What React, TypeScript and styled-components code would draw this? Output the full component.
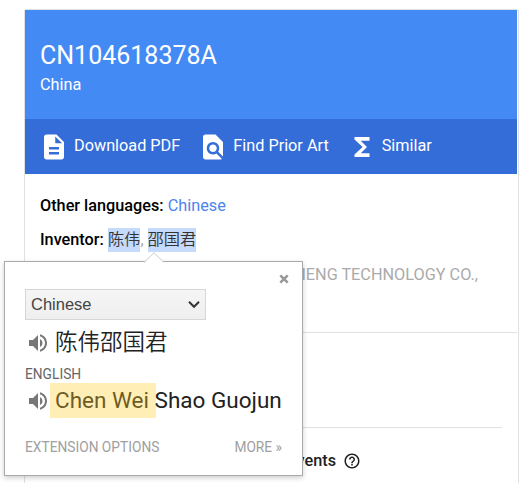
import React from 'react';
import styled, { createGlobalStyle } from 'styled-components';
import {
  MdDescription,
  MdFindInPage,
  MdFunctions,
  MdHelpOutline,
  MdVolumeUp,
} from 'react-icons/md';

const GlobalStyle = createGlobalStyle`
  * {
    box-sizing: border-box;
  }

  body {
    margin: 0;
    overflow: hidden;
    background: #fff;
    font-family: Roboto, 'Noto Sans CJK SC', sans-serif;
  }
`;

const Page = styled.main`
  position: relative;
  height: 483px;
  padding: 9px 9px 0 24px;
  overflow: hidden;
`;

const Card = styled.section`
  height: 490px;
  padding-right: 1px;
  border: 1px solid #e0e0e0;
  border-radius: 2px;
`;

const Header = styled.header`
  height: 109px;
  padding: 30px 15px 0;
  color: #fff;
  background: #448af5;
`;

const Title = styled.h1`
  margin: 0;
  font-size: 25px;
  font-weight: 400;
  line-height: 32px;
`;

const Country = styled.div`
  font-size: 16.25px;
  line-height: 26px;
`;

const Toolbar = styled.nav`
  display: flex;
  gap: 19px;
  height: 55px;
  padding: 13px 14px 0;
  background: #346cd8;
`;

const ToolbarLink = styled.a`
  display: flex;
  gap: 5px;
  height: 30px;
  margin-right: -1px;
  color: #fff;
  font-size: 16.25px;
  line-height: 28px;
`;

const Details = styled.div`
  height: 159px;
  padding: 15px 15px 0;
  border-bottom: 1px solid #e0e0e0;
  font-size: 16.25px;
`;

const Row = styled.div`
  height: 34.5px;
  line-height: 34px;
  color: #aaa;
  white-space: nowrap;
`;

const Label = styled.span`
  color: #000;
  font-weight: 500;
`;

const LanguageLink = styled.a`
  color: #4d83ee;
`;

const Marked = styled.span`
  display: inline-block;
  height: 24px;
  line-height: 24px;
  vertical-align: middle;
  color: #333;
  background: #c6dafc;
  font-weight: 350;
`;

const Inventors = styled(Row)`
  margin-top: -1px;
  height: 35.5px;
`;

const Assignee = styled(Row)`
  padding-right: 24px;
  text-align: right;
`;

const Status = styled.div`
  height: 95px;
  margin: 0 15px;
  border-bottom: 1px solid #e0e0e0;
`;

const Events = styled.div`
  display: flex;
  align-items: center;
  justify-content: flex-end;
  gap: 7px;
  padding: 22px 156px 0 0;
  color: #212121;
  font-size: 16.25px;
  font-weight: 500;
  line-height: 21px;
`;

const Popup = styled.aside`
  position: absolute;
  top: 261px;
  left: 4px;
  width: 299px;
  height: 215px;
  padding: 27px 20px 0;
  border: 1px solid #aaa;
  background: #fff;
  box-shadow: 0 2px 5px rgba(0, 0, 0, 0.2);
`;

const Pointer = styled.svg`
  position: absolute;
  top: -10px;
  left: 138px;
`;

const CloseButton = styled.svg`
  position: absolute;
  top: 12px;
  right: 13px;
`;

const Select = styled.div`
  display: flex;
  align-items: center;
  justify-content: space-between;
  width: 181px;
  height: 31px;
  padding: 0 4px 0 5px;
  border: 1px solid #d6d6d6;
  color: #444;
  background: linear-gradient(#f5f5f5, #efefef);
  font-family: 'Liberation Sans', sans-serif;
  font-size: 16.5px;
`;

const Phrase = styled.div`
  display: flex;
  align-items: center;
  height: 35px;
  color: #222;
  font-size: 22.5px;
  line-height: 35px;
  white-space: nowrap;

  svg {
    flex: none;
    margin: 1px 5px 0 1px;
    color: #777;
  }
`;

const Source = styled(Phrase)`
  height: 45px;
  font-weight: 350;
`;

const Spoken = styled.span`
  position: relative;

  &::after {
    position: absolute;
    top: 0;
    right: -7px;
    bottom: 0;
    left: -5px;
    background: rgba(255, 204, 40, 0.34);
    content: '';
  }
`;

const TargetLanguage = styled.div`
  height: 18px;
  color: #666;
  font-size: 13.75px;
  line-height: 18px;
`;

const PopupFooter = styled.footer`
  display: flex;
  justify-content: space-between;
  margin-top: 20px;
  color: #a0a0a0;
  font-size: 13.75px;
  line-height: 18px;
`;

const actions = [
  { title: 'Download PDF', Icon: MdDescription },
  { title: 'Find Prior Art', Icon: MdFindInPage },
  { title: 'Similar', Icon: MdFunctions },
];

const TranslatePopup: React.FC = () => (
  <Popup>
    <Pointer width="22" height="12" viewBox="0 0 22 12">
      <path d="M1 10.5 11 .8l10 9.7V12H1z" fill="#fff" />
      <path d="M1 10.5 11 .8l10 9.7" fill="none" stroke="#ccc" />
    </Pointer>
    <CloseButton width="10" height="10" viewBox="0 0 10 10">
      <path d="M1.3 1.3l7.4 7.4M8.7 1.3 1.3 8.7" stroke="#999" strokeWidth="2.6" />
    </CloseButton>
    <Select>
      Chinese
      <svg width="14" height="9" viewBox="0 0 14 9">
        <path d="M2 1.8l5 5 5-5" fill="none" stroke="#333" strokeWidth="2" />
      </svg>
    </Select>
    <Source>
      <MdVolumeUp size={24} />
      <span>陈伟邵国君</span>
    </Source>
    <TargetLanguage>ENGLISH</TargetLanguage>
    <Phrase>
      <MdVolumeUp size={24} />
      <Spoken>Chen Wei</Spoken>&nbsp;Shao Guojun
    </Phrase>
    <PopupFooter>
      <span>EXTENSION OPTIONS</span>
      <span>MORE »</span>
    </PopupFooter>
  </Popup>
);

const App: React.FC = () => (
  <Page>
    <GlobalStyle />
    <Card>
      <Header>
        <Title>CN104618378A</Title>
        <Country>China</Country>
      </Header>
      <Toolbar>
        {actions.map(({ title, Icon }) => (
          <ToolbarLink key={title}>
            <Icon size={30} />
            {title}
          </ToolbarLink>
        ))}
      </Toolbar>
      <Details>
        <Row>
          <Label>Other languages:</Label> <LanguageLink>Chinese</LanguageLink>
        </Row>
        <Inventors>
          <Label>Inventor:</Label> <Marked>陈伟</Marked>, <Marked>邵国君</Marked>
        </Inventors>
        <Assignee>HENG TECHNOLOGY CO.,</Assignee>
      </Details>
      <Status />
      <Events>
        <span>events</span>
        <MdHelpOutline size={18} />
      </Events>
    </Card>
    <TranslatePopup />
  </Page>
);

export default App;
